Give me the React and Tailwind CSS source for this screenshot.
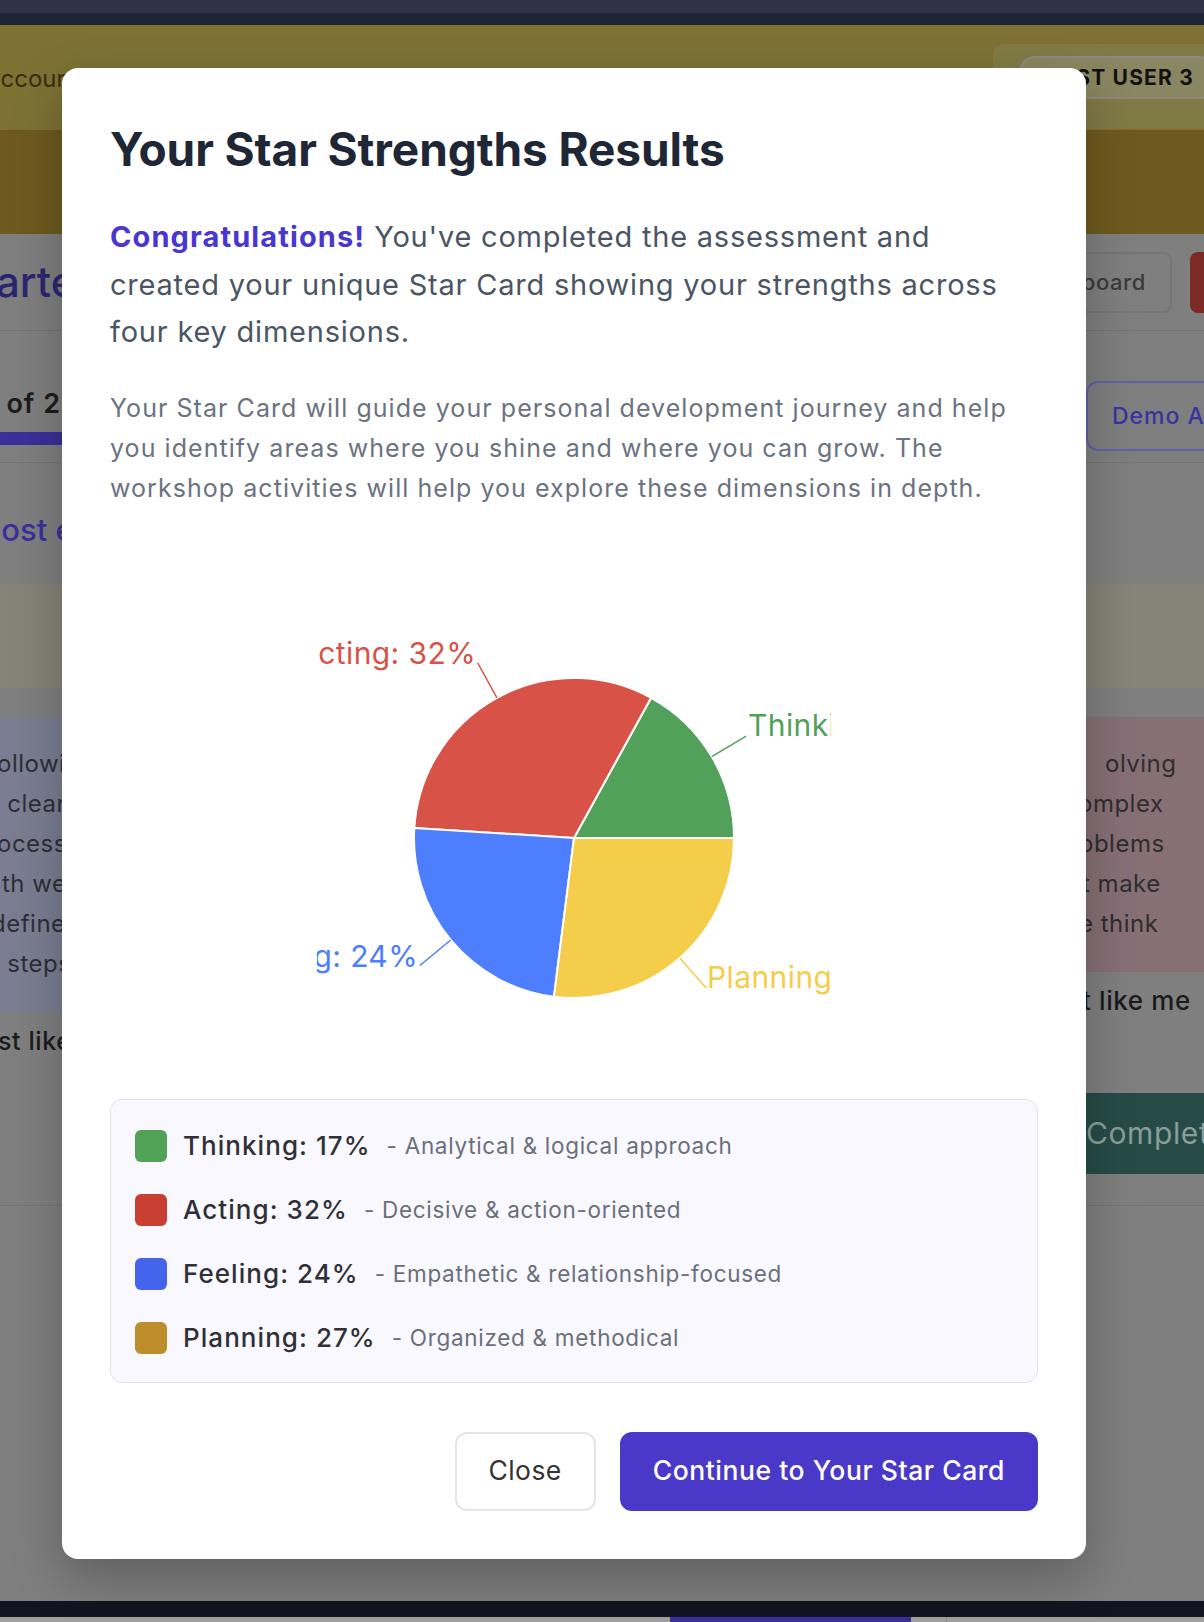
import React from "react";

const CX = 257;
const CY = 200;
const R = 160;

const slices = [
  { name: "Thinking", value: 17, color: "#51a15b", start: 0, end: 61.2, lx: 431, ly: 98, anchor: "start" },
  { name: "Acting", value: 32, color: "#d95247", start: 61.2, end: 176.4, lx: 159, ly: 26, anchor: "end" },
  { name: "Feeling", value: 24, color: "#4d7efe", start: 176.4, end: 262.8, lx: 101, ly: 329, anchor: "end" },
  { name: "Planning", value: 27, color: "#f4cd4b", start: 262.8, end: 360, lx: 390, ly: 350, anchor: "start" },
];

const pt = (deg, r) => {
  const a = (deg * Math.PI) / 180;
  return [CX + r * Math.cos(a), CY - r * Math.sin(a)];
};

const arcPath = (s, e) => {
  const [x1, y1] = pt(s, R);
  const [x2, y2] = pt(e, R);
  const large = e - s > 180 ? 1 : 0;
  return `M ${CX} ${CY} L ${x1} ${y1} A ${R} ${R} 0 ${large} 0 ${x2} ${y2} Z`;
};

const legend = [
  { label: "Thinking: 17%", desc: "- Analytical & logical approach", color: "bg-[#51a157]" },
  { label: "Acting: 32%", desc: "- Decisive & action-oriented", color: "bg-[#c83f31]" },
  { label: "Feeling: 24%", desc: "- Empathetic & relationship-focused", color: "bg-[#4364eb]" },
  { label: "Planning: 27%", desc: "- Organized & methodical", color: "bg-[#be8d2b]" },
];

function PieChart() {
  return (
    <svg width="514" height="400" viewBox="0 0 514 400" className="block overflow-hidden">
      {slices.map((s) => (
        <path key={s.name} d={arcPath(s.start, s.end)} fill={s.color} stroke="#ffffff" strokeWidth="2" />
      ))}
      {slices.map((s) => {
        const mid = (s.start + s.end) / 2;
        const [x1, y1] = pt(mid, R);
        const [x2, y2] = pt(mid, 200);
        return (
          <g key={s.name + "-l"}>
            <line x1={x1} y1={y1} x2={x2} y2={y2} stroke={s.color} strokeWidth="1.5" />
            <text
              x={s.lx}
              y={s.ly}
              textAnchor={s.anchor}
              fill={s.color}
              fontSize="30"
              letterSpacing="0.4"
              fontFamily="Inter, 'Noto Sans', sans-serif"
            >
              {s.name}: {s.value}%
            </text>
          </g>
        );
      })}
    </svg>
  );
}

function Backdrop() {
  return (
    <div className="flex flex-col">
      <div className="h-[13px] bg-[#2e3349]" />
      <div className="h-[12px] bg-[#1f2336]" />
      {/* banner */}
      <div className="flex h-[105px] items-start justify-between bg-[#7d7234]">
        <div className="-ml-[13px] pt-[38px] text-[24px] leading-[32px] text-[#3a2c10] whitespace-nowrap">
          account data will be reset periodically
        </div>
        <div className="mt-[18px] -mr-[40px] flex h-[87px] w-[252px] items-start rounded-t-xl border border-[#8d6c27] bg-[#807a46] pl-[26px] pt-[12px]">
          <div className="flex h-[43px] w-[197px] items-center justify-end rounded-[16px] border-2 border-[#8c8a80] bg-[#8a8661] pr-[20px] text-[21px] font-bold tracking-[1.2px] text-[#111111] whitespace-nowrap">
            TEST USER 3
          </div>
        </div>
      </div>
      <div className="h-[104px] bg-[#6e5a1f]" />
      {/* header */}
      <div className="flex h-[97px] items-center justify-between border-b border-[#737373]">
        <div className="-ml-[4px] text-[42px] font-medium leading-none text-[#2b2670] whitespace-nowrap">artem</div>
        <div className="-mr-[60px] flex items-center gap-[18px]">
          <div className="flex h-[61px] items-center rounded-lg border-2 border-[#757575] px-[24px] text-[22px] font-medium tracking-[0.6px] text-[#3a3a3a]">
            Dashboard
          </div>
          <div className="h-[61px] w-[74px] rounded-lg bg-[#7b2a25]" />
        </div>
      </div>
      {/* step row */}
      <div className="flex h-[132px] justify-between border-b border-[#737373]">
        <div className="flex w-[80px] flex-col">
          <div className="flex w-[61px] justify-end pt-[58px] text-[27px] font-semibold leading-[30px] tracking-[1px] text-[#1c1c1c] whitespace-nowrap">
            Question 1 of 2
          </div>
          <div className="mt-[13px] h-[13px] w-[80px] bg-[#3b2f9a]" />
        </div>
        <div className="-mr-[40px] mt-[50px] flex h-[70px] w-[158px] items-center rounded-xl border-2 border-[#5f60a8] pl-[24px] text-[23px] font-medium tracking-[1px] text-[#3a33a0] whitespace-nowrap">
          Demo Assessment
        </div>
      </div>
      {/* content */}
      <div className="flex flex-col border-b border-[#747474] pb-[31px]">
        <div className="-ml-[27px] pt-[47px] text-[31px] font-medium leading-[40px] text-[#3b2f9e] whitespace-nowrap">
          Most energizing
        </div>
        <div className="mt-[34px] h-[104px] bg-[#868478]" />
        <div className="mt-[29px] flex justify-between">
          <div className="flex w-[300px] flex-col">
            <div className="h-[295px] bg-[#7b7e92] pt-[27px] text-[24px] leading-[40px] tracking-[0.5px] text-[#2e2e36] whitespace-pre">
              <div className="-ml-[3px]">ollowing a</div>
              <div> clear</div>
              <div className="-ml-[3px]">ocesses</div>
              <div className="ml-[2px]">th well-</div>
              <div className="-ml-[9px]">defined</div>
              <div> steps</div>
            </div>
            <div className="-ml-[2px] mt-[9px] text-[25px] font-medium leading-[40px] tracking-[0.6px] text-[#1b1b1b] whitespace-nowrap">
              st like me
            </div>
          </div>
          <div className="-mr-[40px] flex w-[200px] flex-col">
            <div className="h-[255px] bg-[#876f76] pl-[32px] pt-[27px] text-[24px] leading-[40px] tracking-[0.5px] text-[#2e2e2e] whitespace-nowrap">
              <div className="ml-[29px]">olving</div>
              <div className="ml-[2px]">omplex</div>
              <div className="ml-[3px]">oblems</div>
              <div className="ml-[6px]">t make</div>
              <div className="ml-[3px]">e think</div>
            </div>
            <div className="ml-[38px] mt-[9px] text-[26px] font-medium leading-[40px] tracking-[0.6px] text-[#1b1b1b] whitespace-nowrap">
              t like me
            </div>
            <div className="mt-[72px] flex h-[81px] items-center bg-[#264b47] pl-[42px] text-[30px] tracking-[0.6px] text-[#8a9d99] whitespace-nowrap">
              Complete
            </div>
          </div>
        </div>
      </div>
      <div className="h-[395px]" />
      <div className="h-[16px] bg-[#13141f]" />
      <div className="flex h-[10px] bg-[#a0a0a0]">
        <div className="ml-[670px] w-[241px] bg-[#3b2f9a]" />
        <div className="ml-[35px] w-px bg-[#8a8a8a]" />
      </div>
    </div>
  );
}

export default function App() {
  return (
    <div className="relative h-[1622px] w-[1204px] overflow-hidden bg-[#7f7f7f] font-['Inter','Noto_Sans',sans-serif]">
      <Backdrop />
      <div className="absolute left-[62px] top-[68px] w-[1024px] rounded-2xl bg-white p-12 shadow-[0_20px_50px_rgba(0,0,0,0.25)]">
        <h2 className="text-[46px] font-bold leading-[66px] tracking-[-0.1px] text-[#1f2737]">
          Your Star Strengths Results
        </h2>
        <p className="mt-[31px] text-[29px] leading-[47.5px] tracking-[0.78px] text-[#4b5563]">
          <span className="font-bold tracking-[1.1px] text-[#4a36d0]">Congratulations!</span> You've completed the
          assessment and created your unique Star Card showing your strengths across four key dimensions.
        </p>
        <p className="mt-[32px] text-[25px] leading-[40px] tracking-[1.05px] text-[#6b7280]">
          Your Star Card will guide your personal development journey and help you identify areas where you shine and
          where you can grow. The workshop activities will help you explore these dimensions in depth.
        </p>
        <div className="mt-[130px] flex justify-center">
          <PieChart />
        </div>
        <div className="mt-[61px] flex flex-col gap-8 rounded-xl border border-[#e3e3ea] bg-[#f8f8fe] px-6 pt-[30px] pb-[28px]">
          {legend.map((l) => (
            <div key={l.label} className="flex h-8 items-center">
              <div className={`h-8 w-8 shrink-0 rounded-md ${l.color}`} />
              <span className="ml-4 text-[26px] font-medium tracking-[1.05px] text-[#303036] whitespace-nowrap">
                {l.label}
              </span>
              <span className="ml-[16px] text-[22.5px] tracking-[0.7px] text-[#6b6f7d] whitespace-nowrap">{l.desc}</span>
            </div>
          ))}
        </div>
        <div className="mt-[49px] flex justify-end gap-6">
          <button className="flex h-[79px] items-center rounded-xl border-2 border-[#e4e4ea] bg-white px-[32px] text-[26.5px] tracking-[0.4px] text-[#333333]">
            Close
          </button>
          <button className="flex h-[79px] items-center rounded-xl bg-[#4a39c9] px-[33px] text-[26.5px] font-medium tracking-[0.55px] text-white">
            Continue to Your Star Card
          </button>
        </div>
      </div>
    </div>
  );
}
